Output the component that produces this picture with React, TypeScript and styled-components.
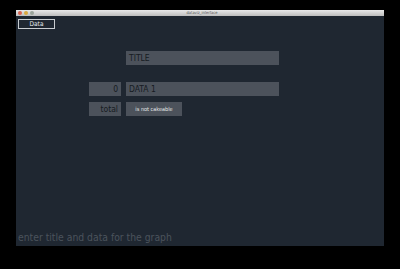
import styled, { createGlobalStyle } from 'styled-components'

const Global = createGlobalStyle`
	html, body {
		margin: 0;
		background: #000;
	}
	body {
		width: 400px;
		height: 269px;
		overflow: hidden;
	}
`

const Screen = styled.div`
	padding: 10px 16px 0 16px;
`
const Window = styled.div`
	width: 368px;
	height: 236px;
	display: flex;
	flex-direction: column;
	background: #1f2731;
`
const TitleBar = styled.div`
	height: 6px;
	flex: none;
	display: flex;
	align-items: center;
	background: linear-gradient(#e9e9e9, #bdbdbd);
`
const Lights = styled.div`
	display: flex;
	gap: 2px;
	padding-left: 2px;
`
const Light = styled.span<{ $c: string }>`
	width: 4px;
	height: 4px;
	border-radius: 50%;
	background: ${p => p.$c};
`
const WinTitle = styled.span`
	flex: 1;
	text-align: center;
	font-family: "DejaVu Sans Condensed", "DejaVu Sans", sans-serif;
	font-size: 4px;
	line-height: 6px;
	color: #555;
	margin-right: 14px;
`
const Content = styled.div`
	flex: 1;
	display: flex;
	flex-direction: column;
	padding: 3px 2px 3px 2px;
	font-family: "DejaVu Sans Condensed", "DejaVu Sans", sans-serif;
`
const TabButton = styled.div`
	width: 35px;
	height: 8px;
	border: 1px solid #c8ccd0;
	color: #e8eaec;
	font-size: 6.5px;
	line-height: 8px;
	text-align: center;
	align-self: flex-start;
`
const Form = styled.div`
	margin: 22px 0 0 71px;
	display: grid;
	grid-template-columns: 32px 153px;
	grid-template-rows: 14px 5px 14px 14px;
	column-gap: 5px;
	row-gap: 6px;
`
const Field = styled.div<{ $right?: boolean; $span?: boolean }>`
	background: #4c525b;
	color: #161b22;
	font-size: 8.5px;
	line-height: 14px;
	padding: 0 3px;
	text-align: ${p => (p.$right ? 'right' : 'left')};
	grid-column: ${p => (p.$span ? '2' : 'auto')};
`
const Spacer = styled.div`
	grid-column: 1 / 3;
`
const Toggle = styled.div`
	justify-self: start;
	width: 56px;
	background: #4c525b;
	color: #e6e8ea;
	font-size: 5.5px;
	line-height: 14px;
	text-align: center;
`
const Hint = styled.div`
	margin-top: auto;
	color: #4b535c;
	font-size: 10.3px;
	line-height: 12px;
`

export default function App() {
	return (
		<Screen>
			<Global />
			<Window>
				<TitleBar>
					<Lights>
						<Light $c="#d9634f" />
						<Light $c="#d9a83f" />
						<Light $c="#9aa39a" />
					</Lights>
					<WinTitle>dataviz_interface</WinTitle>
				</TitleBar>
				<Content>
					<TabButton>Data</TabButton>
					<Form>
						<Field $span>TITLE</Field>
						<Spacer />
						<Field $right>0</Field>
						<Field>DATA 1</Field>
						<Field $right>total</Field>
						<Toggle>is not cakeable</Toggle>
					</Form>
					<Hint>enter title and data for the graph</Hint>
				</Content>
			</Window>
		</Screen>
	)
}
